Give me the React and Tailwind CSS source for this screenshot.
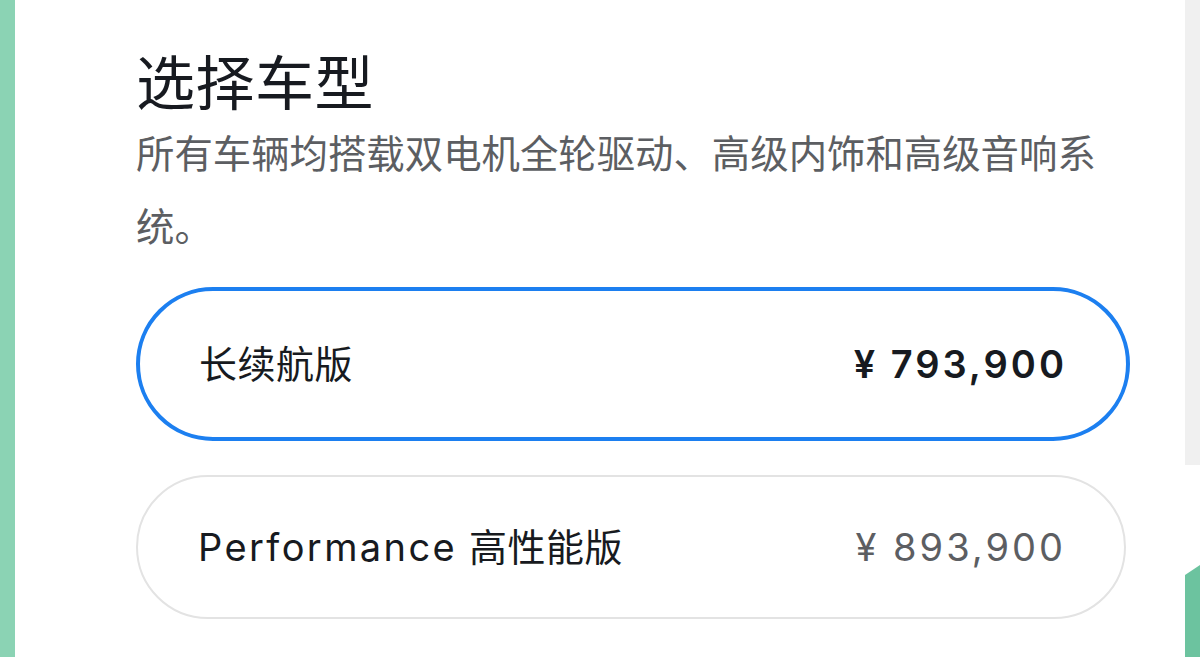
import React, { useState } from 'react';

const cjk = '"Noto Sans CJK SC", sans-serif';
const mixed = 'Inter, "Noto Sans CJK SC", sans-serif';

const models = [
    { id: 'lr', latin: '', name: '长续航版', price: '¥ 793,900' },
    { id: 'perf', latin: 'Performance', name: '高性能版', price: '¥ 893,900' },
];

function ModelOption({ model, selected, onSelect }) {
    return (
        <button
            type="button"
            onClick={() => onSelect(model.id)}
            style={{ fontFamily: mixed }}
            className={
                selected
                    ? 'w-[994px] h-[154px] rounded-full border-[4px] border-[#1c7ff0] bg-white flex items-center justify-between pl-[59px] pr-[59px] text-left'
                    : 'w-[990px] h-[144px] rounded-full border-2 border-[#e3e3e3] bg-white flex items-center justify-between pl-[60px] pr-[58px] text-left'
            }
        >
            <span className="text-[38px] text-[#171a20] leading-none">
                {model.latin && <span className="tracking-[2.4px] mr-[12px]">{model.latin}</span>}
                <span className="tracking-[0.5px]">{model.name}</span>
            </span>
            <span
                className={
                    selected
                        ? 'text-[38px] font-semibold text-[#171a20] tracking-[3px] leading-none'
                        : 'text-[38px] text-[#5c5e62] tracking-[3px] leading-none'
                }
            >
                {model.price}
            </span>
        </button>
    );
}

export default function App() {
    const [selected, setSelected] = useState('lr');

    return (
        <div className="w-[1200px] h-[657px] flex bg-white overflow-hidden">
            {/* left edge */}
            <div className="w-[15px] h-full bg-[#8bd3b4]" />

            <div className="flex-1 pl-[121px] pt-[50px]">
                <h1 style={{ fontFamily: cjk }} className="text-[59px] tracking-[0.5px] leading-[60px] text-[#171a20]">
                    选择车型
                </h1>
                <p style={{ fontFamily: cjk }} className="mt-[5px] w-[980px] text-[38.4px] leading-[73px] text-[#5c5e62]">
                    所有车辆均搭载双电机全轮驱动、高级内饰和高级音响系统。
                </p>

                <div className="mt-[26px] flex flex-col gap-[34px]">
                    {models.map(m => (
                        <ModelOption
                            key={m.id}
                            model={m}
                            selected={selected === m.id}
                            onSelect={setSelected}
                        />
                    ))}
                </div>
            </div>

            {/* right edge */}
            <div className="w-[15px] h-full flex flex-col">
                <div className="h-[465px] bg-[#f0f0f0]" />
                <div className="flex-1" />
                <svg width="15" height="92" viewBox="0 0 15 92" className="block">
                    <polygon points="0,10 15,0 15,92 0,92" fill="#6cc39f" />
                </svg>
            </div>
        </div>
    );
}
